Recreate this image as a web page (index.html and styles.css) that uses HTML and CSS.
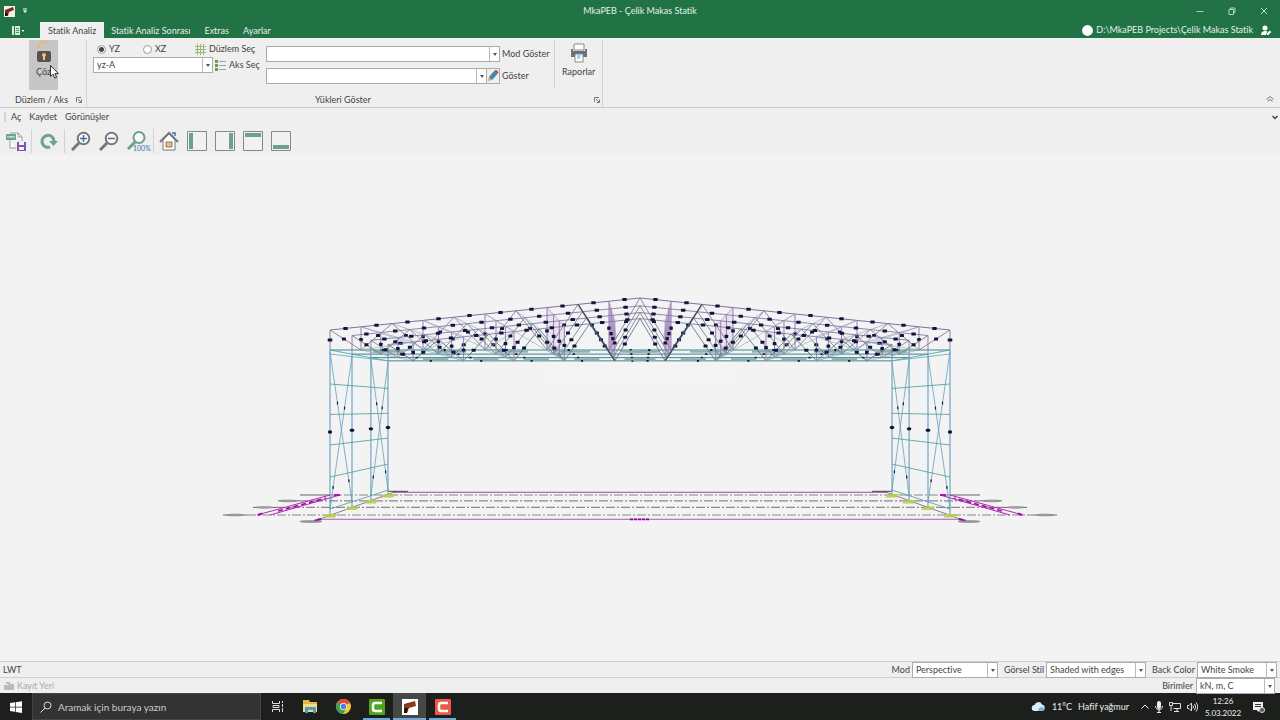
FILE: index.html
```html
<!DOCTYPE html>
<html lang="tr">
<head>
<meta charset="utf-8">
<title>MkaPEB - Çelik Makas Statik</title>
<link rel="stylesheet" href="styles.css">
</head>
<body>
<div class="app">
  <header class="titlebar">
    <div class="quick">
      <svg width="11" height="11" viewBox="0 0 11 11"><rect width="11" height="11" fill="#f6efec"/><path d="M1 4 9 1l1 3-5 2-1 4H1z" fill="#7a2d14"/><path d="M1 7h3l-1 3H1z" fill="#241512"/></svg>
      <svg width="6" height="6" viewBox="0 0 6 6"><path d="M1 1h4" stroke="#fff"/><path d="M1 2.500h4L3 5z" fill="#fff"/></svg>
    </div>
    <h1 class="title">MkaPEB - Çelik Makas Statik</h1>
    <div class="winbtns">
      <button aria-label="Küçült"><svg width="8" height="8" viewBox="0 0 8 8"><path d="M.5 4.500h7" stroke="#a9cdb8"/></svg></button>
      <button aria-label="Geri yükle"><svg width="8" height="8" viewBox="0 0 8 8" fill="none" stroke="#b5d3c1"><path d="M1 2.500h4.500v5H1zM2.500 2.500v-1.500h4.500v4.500H5.500"/></svg></button>
      <button aria-label="Kapat"><svg width="8" height="8" viewBox="0 0 8 8"><path d="M1 1l6 6M7 1 1 7" stroke="#c5dece"/></svg></button>
    </div>
  </header>

  <nav class="tabs">
    <button class="filetab" aria-label="Dosya"><svg width="13" height="9" viewBox="0 0 13 9"><path d="M0 0h2v9H0zM3 0h5v9H3z" fill="#dcebe2"/><path d="M4 2.500h3M4 4.500h3M4 6.500h3" stroke="#4f8d69"/><path d="M9.500 4h3L11 6z" fill="#fff"/></svg></button>
    <button class="tab active">Statik Analiz</button>
    <button class="tab">Statik Analiz Sonrası</button>
    <button class="tab">Extras</button>
    <button class="tab">Ayarlar</button>
    <div class="project">
      <svg width="11" height="11" viewBox="0 0 11 11"><circle cx="5.500" cy="5.500" r="5.400" fill="#fff"/></svg>
      <span>D:\MkaPEB Projects\Çelik Makas Statik</span>
      <svg class="user" width="11" height="11" viewBox="0 0 11 11" fill="#fff"><circle cx="4" cy="3" r="2.500"/><path d="M0 10c0-3 2-4 4-4 1.500 0 2 .3 2.600.8L5 9v1z"/><path d="m5.800 8.600 3-3 1.500 1.500-3 3H5.800z"/></svg>
    </div>
  </nav>

  <section class="ribbon">
    <div class="group solve-group">
      <div class="group-body">
        <button class="solve">
          <svg width="20" height="23" viewBox="0 0 20 23"><path d="M5 8V5q5-6 10-1" stroke="#e5b883" stroke-width="2.500" stroke-dasharray="3 1" fill="none"/><rect x="3" y="11" width="14" height="11" rx="2" fill="#5b504c"/><path d="M10 13a2 2 0 0 1 1 3.700V20H9v-3.300A2 2 0 0 1 10 13z" fill="#f0c48a"/></svg>
          <span>Çöz</span>
        </button>
      </div>
      <div class="caption"><span>Düzlem / Aks</span><svg class="launch" width="6" height="6" viewBox="0 0 6 6" fill="none" stroke="#777"><path d="M.5 5V.5H5M2 2l3 3M5.500 2.500v3h-3"/></svg></div>
    </div>
    <div class="group wide-group">
      <div class="group-body loads">
        <div class="plane">
          <div class="row">
            <label class="opt"><input type="radio" name="plane" checked>YZ</label>
            <label class="opt"><input type="radio" name="plane">XZ</label>
            <button class="link"><svg width="11" height="11" viewBox="0 0 11 11" stroke="#9ab77c" fill="none"><path d="M2.500 0v11M5.500 0v11M8.500 0v11M0 2.500h11M0 5.500h11M0 8.500h11"/></svg>Düzlem Seç</button>
          </div>
          <div class="row">
            <span class="combo axis"><select aria-label="Aks"><option>yz-A</option></select></span>
            <button class="link near"><svg width="11" height="11" viewBox="0 0 11 11"><path d="M0 0h3v3H0zM0 4h3v3H0zM0 8h3v3H0z" fill="#6f9d45"/><path d="M4 1.500h7M4 5.500h7M4 9.500h7" stroke="#8aa5bd"/></svg>Aks Seç</button>
          </div>
        </div>
        <div class="shows">
          <div class="row"><span class="combo mode"><select id="mode"><option></option></select></span><label for="mode">Mod Göster</label></div>
          <div class="row"><span class="combo show"><select id="show"><option></option></select></span><button class="pencil" aria-label="Düzenle"><svg width="12" height="12" viewBox="0 0 12 12"><path d="m1 11 1-4 3 3z" fill="#dca56c"/><path d="m2 7 5-6 3.500 3-5.500 6z" fill="#4686a8"/><path d="m7 1 1.500-1q2.500 0 3 3l-1 1z" fill="#a9583f"/></svg></button><label for="show">Göster</label></div>
        </div>
        <button class="reports">
          <svg width="18" height="20" viewBox="0 0 18 20"><path d="M4 1h10v6H4z" fill="#fff" stroke="#888"/><path d="M1 6h2v2h12V6h2v8H1z" fill="#737373"/><path d="M4 9h10v2H4z" fill="#3d6fa8"/><path d="M5 11h8v8H5z" fill="#fff" stroke="#888"/><path d="M7 13h4M7 15h3" stroke="#6d9bd0"/></svg>
          <span>Raporlar</span>
        </button>
      </div>
      <div class="caption"><span>Yükleri Göster</span><svg class="launch" width="6" height="6" viewBox="0 0 6 6" fill="none" stroke="#777"><path d="M.5 5V.5H5M2 2l3 3M5.500 2.500v3h-3"/></svg></div>
    </div>
    <button class="collapse" aria-label="Şeridi daralt"><svg width="8" height="6" viewBox="0 0 8 6" fill="none" stroke="#777"><path d="m.5 3.500 3.500-3 3.500 3M1.500 5.500l2.500-2 2.500 2"/></svg></button>
  </section>

  <nav class="menu">
    <button>Aç</button><button>Kaydet</button><button>Görünüşler</button>
    <svg class="more" width="6" height="5" viewBox="0 0 6 5"><path d="m.5 1 2.500 2.500L5.500 1" stroke="#444" stroke-width="1.500" fill="none"/></svg>
  </nav>

  <div class="tools">
    <button class="export" aria-label="Dışa aktar"><svg width="20" height="20" viewBox="0 0 20 20"><path d="M4 2h8l4 4v4M4 9v8h6" fill="#fff" stroke="#999"/><path d="M12 2v4h4" fill="none" stroke="#999"/><rect y="3" width="10" height="6" fill="#6da38f"/><path d="M2 5v2M4 7V5l1 1 1-1v2M8 5v2" stroke="#dbeee6" fill="none"/><path d="M11 11h9v9h-9z" fill="#7c56a0"/><path d="M13 11h5v3h-5zM13 16h5v3h-5z" fill="#f4eff8"/></svg></button>
    <button class="refresh" aria-label="Yenile"><svg width="18" height="16" viewBox="0 0 18 16"><path d="M10 14A6 6 0 1 1 14 8" fill="none" stroke="#6ca28e" stroke-width="3"/><path d="M9 8h9l-4.500 5z" fill="#6ca28e"/></svg></button>
    <button aria-label="Yakınlaştır"><svg width="20" height="20" viewBox="0 0 20 20" fill="none"><path d="M8 12 1 19" stroke="#777" stroke-width="3"/><circle cx="12.500" cy="7.500" r="5.800" fill="#f8f8f8" stroke="#777" stroke-width="2"/><path d="M9 7.500h7M12.500 4v7" stroke="#426eb1" stroke-width="1.500"/></svg></button>
    <button aria-label="Uzaklaştır"><svg width="20" height="20" viewBox="0 0 20 20" fill="none"><path d="M8 12 1 19" stroke="#777" stroke-width="3"/><circle cx="12.500" cy="7.500" r="5.800" fill="#f8f8f8" stroke="#777" stroke-width="2"/><path d="M9 7.500h7" stroke="#426eb1" stroke-width="1.500"/></svg></button>
    <button class="fit" aria-label="Yüzde yüz"><svg width="24" height="22" viewBox="0 0 24 22" fill="none"><path d="M8 12 1 19" stroke="#68a08b" stroke-width="3"/><circle cx="12" cy="7.500" r="5.500" fill="#f8f8f8" stroke="#68a08b" stroke-width="2"/><text x="6" y="21" class="pct">100%</text></svg></button>
    <button class="home" aria-label="Ana görünüm"><svg width="20" height="20" viewBox="0 0 20 20" fill="none"><path d="M4 9v10h12V9l-6-6z" fill="#fff" stroke="#777"/><path d="m1 11 9-9 9 9" stroke="#777" stroke-width="2"/><path d="M13 2h3v3" stroke="#426eb1" stroke-width="1.500"/><path d="M7 11h6v5H7z" fill="#f0c465" stroke="#777"/></svg></button>
    <button aria-label="Sol panel"><svg width="20" height="20" viewBox="0 0 20 20"><path d="M.5.5h19v19H.5z" fill="#f1f1f1" stroke="#888"/><path d="M2 2h4v16H2z" fill="#6ba28e"/></svg></button>
    <button aria-label="Sağ panel"><svg width="20" height="20" viewBox="0 0 20 20"><path d="M.5.5h19v19H.5z" fill="#f1f1f1" stroke="#888"/><path d="M14 2h4v16h-4z" fill="#6ba28e"/></svg></button>
    <button aria-label="Üst panel"><svg width="20" height="20" viewBox="0 0 20 20"><path d="M.5.5h19v19H.5z" fill="#f1f1f1" stroke="#888"/><path d="M2 2h16v4H2z" fill="#6ba28e"/></svg></button>
    <button aria-label="Alt panel"><svg width="20" height="20" viewBox="0 0 20 20"><path d="M.5.5h19v19H.5z" fill="#f1f1f1" stroke="#888"/><path d="M2 14h16v4H2z" fill="#6ba28e"/></svg></button>
  </div>

  <main class="viewport"><svg id="model" viewBox="0 155 1280 506"></svg></main>

  <footer class="status">
    <span class="grow">LWT</span>
    <label for="proj">Mod</label><span class="combo s1"><select id="proj"><option>Perspective</option></select></span>
    <label for="style">Görsel Stil</label><span class="combo s2"><select id="style"><option>Shaded with edges</option></select></span>
    <label for="back">Back Color</label><span class="combo s3"><select id="back"><option>White Smoke</option></select></span>
  </footer>
  <footer class="status second">
    <svg width="10" height="9" viewBox="0 0 10 9"><path d="M0 4h4l1-1h5v6H0zM2 1h4v2H2z" fill="#bbb"/></svg>
    <span class="grow muted">Kayıt Yeri</span>
    <label for="units">Birimler</label><span class="combo s4"><select id="units"><option>kN, m, C</option></select></span>
  </footer>

  <footer class="taskbar">
    <button class="start" aria-label="Başlat"><svg width="12" height="12" viewBox="0 0 12 12" fill="#fff"><path d="m0 2 5-.7V5.700H0zM5.700 1.200 12 .2v5.500H5.700zM0 6.400h5v4.400l-5-.7zM5.700 6.400H12v5.500l-6.300-.9z"/></svg></button>
    <label class="search"><svg width="12" height="12" viewBox="0 0 12 12" fill="none" stroke="#ddd"><circle cx="7.500" cy="4.500" r="3.500"/><path d="M5 7 .5 11.500"/></svg><input type="text" placeholder="Aramak için buraya yazın" aria-label="Arama"></label>
    <button class="app-btn" aria-label="Görev görünümü"><svg width="12" height="11" viewBox="0 0 12 11" fill="none" stroke="#ddd"><path d="M.5 0v2.500h7V0M.5 11V8.500h7V11M1 4.500h6v2H1zM10.500 0v2M10.500 3v3M10.500 7v4"/></svg></button>
    <button class="app-btn" aria-label="Dosya Gezgini"><svg width="15" height="13" viewBox="0 0 15 13"><path d="M0 0h6l1 2h7v10H0z" fill="#e8b544"/><path d="M0 4h14v8H0z" fill="#f8d978"/><path d="M2 7h11v6h-3v-3H5v3H2z" fill="#4a9bc9"/></svg></button>
    <button class="app-btn" aria-label="Chrome"><svg width="15" height="15" viewBox="0 0 16 16"><circle cx="8" cy="8" r="8" fill="#f5c932"/><path d="M8 8 1 4a8 8 0 0 1 14 0z" fill="#df4c3c"/><path d="M8 8 1 4a8 8 0 0 0 6.500 12L11 10z" fill="#3aa257"/><circle cx="8" cy="8" r="3.800" fill="#fff"/><circle cx="8" cy="8" r="3" fill="#4a83dc"/></svg></button>
    <button class="app-btn open" aria-label="Camtasia"><svg width="16" height="16" viewBox="0 0 16 16"><rect width="16" height="16" rx="1" fill="#51a51e"/><path d="M13 4H6.500Q4 4 4 6v4q0 2 2.500 2H13" stroke="#fff" stroke-width="2.500" fill="none"/></svg></button>
    <button class="app-btn open current" aria-label="MkaPEB"><svg width="16" height="16" viewBox="0 0 16 16"><rect width="16" height="16" fill="#fff"/><path d="m2 5 11-3 1 5-7 2-2 5H2z" fill="#873b1b"/><path d="M2 9h4l-1 5H2z" fill="#25120d"/></svg></button>
    <button class="app-btn open" aria-label="Camtasia Recorder"><svg width="16" height="16" viewBox="0 0 16 16"><rect width="16" height="16" rx="1" fill="#ec5849"/><path d="M13 4H6.500Q4 4 4 6v4q0 2 2.500 2H13" stroke="#fff" stroke-width="2.500" fill="none"/></svg></button>
    <div class="tray">
      <svg width="15" height="11" viewBox="0 0 15 11"><path d="M4 10a3 3 0 0 1-.5-6A4 4 0 0 1 11 3.500a3.300 3.300 0 0 1 0 6.500z" fill="#d9edfb"/><path d="M7 10c0-3 2-4 4-4a2 2 0 0 1 0 4z" fill="#79b5e5"/></svg>
      <span class="weather"><span>11°C</span><span>Hafif yağmur</span></span>
      <svg width="8" height="5" viewBox="0 0 8 5"><path d="M.5 4.500 4 1l3.500 3.500" stroke="#eee" fill="none"/></svg>
      <svg width="8" height="12" viewBox="0 0 8 12"><rect x="2" width="4" height="8" rx="2" fill="#eee"/><path d="M.5 5c0 5 7 5 7 0M4 9v2.500M2 11.500h4" stroke="#eee" fill="none"/></svg>
      <svg width="12" height="10" viewBox="0 0 12 10" fill="none" stroke="#ddd"><path d="M3.500 1.500h8v5h-7M.5.5h3v3h-3zM2 3.500V9M8 6.500v3M5 9.500h5"/></svg>
      <svg width="11" height="10" viewBox="0 0 11 10" fill="none" stroke="#ddd"><path d="M.5 3.500h1.500L4.500 1v8L2 6.500H.5zM6 3.500q1 1.500 0 3M7.500 2q2.500 3 0 6M9 .5q3.500 4.500 0 9"/></svg>
      <time class="clock"><span>12:26</span><span>5.03.2022</span></time>
      <svg class="note" width="12" height="12" viewBox="0 0 12 12"><path d="M0 1h10v8H7l-2 2-1-2H0z" fill="#eee"/><path d="M2 3.500h6M2 5.500h6" stroke="#333"/><circle cx="9" cy="9" r="2.500" fill="#555" stroke="#ddd"/></svg>
    </div>
  </footer>
  <svg class="cursor" width="9" height="14" viewBox="0 0 9 14"><path d="M.5.5v11l2.600-2.300 1.700 4 1.800-.8L4.900 8.600H8.400z" fill="#fff" stroke="#333"/></svg>
</div>
<script src="model.js"></script>
</body>
</html>
```
FILE: styles.css
```css
* { box-sizing: border-box; }
body { margin: 0; font: 9px/12px Lato, "Noto Sans", sans-serif; font-variant-ligatures: none; color: #444; }
button { border: 0; padding: 0; margin: 0; background: none; font: inherit; color: inherit; }
svg { display: block; flex: none; }
.app { display: flex; flex-direction: column; height: 100vh; background: #efefef; position: relative; overflow: hidden; white-space: nowrap; }

.titlebar { display: grid; grid-template-columns: 1fr auto 1fr; align-items: center; height: 22px; background: #217346; color: #e3efe8; }
.quick { display: flex; align-items: center; gap: 7px; padding-left: 4px; }
.title { margin: 0; font-size: 9px; font-weight: 400; }
.winbtns { display: flex; justify-content: flex-end; gap: 24px; padding-right: 12px; }

.tabs { display: flex; align-items: stretch; height: 16px; background: #217346; color: #e3efe8; }
.filetab { width: 40px; padding-left: 12px; }
.tab { padding: 1px 7px 0; }
.tab.active { background: #efefef; color: #444; padding: 1px 8px 0; }
.project { margin-left: auto; display: flex; align-items: center; gap: 3px; padding-right: 8px; }
.user { margin-left: 5px; }

.ribbon { display: flex; height: 70px; border-bottom: 1px solid #cbcbcb; }
.group { display: flex; flex-direction: column; border-right: 1px solid #d4d4d4; margin-top: 2px; }
.solve-group { width: 87px; }
.wide-group { width: 516px; }
.group-body { flex: 1; }
.caption { display: flex; align-items: center; height: 14px; padding: 0 4px 0 15px; justify-content: space-between; }
.wide-group .caption { padding-left: 228px; padding-right: 2px; }
.solve { display: flex; flex-direction: column; align-items: center; gap: 3px; width: 29px; height: 50px; margin-left: 29px; background: #c6c6c6; }
.loads { display: flex; padding-left: 6px; }
.row { display: flex; align-items: center; height: 16px; }
.plane { width: 173px; padding-top: 1px; }
.opt { display: flex; align-items: center; gap: 3px; width: 46px; }
.opt:first-child { margin-left: 4px; }
.opt input { appearance: none; width: 9px; height: 9px; margin: 0; border: 1px solid #999; border-radius: 50%; background: #fff; }
.opt input:checked { background: radial-gradient(circle, #444 2px, #fff 3px); }
.link { display: flex; align-items: center; gap: 3px; margin-left: 6px; }
.near { margin-left: 2px; }
.shows { display: flex; flex-direction: column; gap: 6px; padding-top: 6px; width: 289px; border-right: 1px solid #d4d4d4; height: 48px; }
.shows label { padding-left: 2px; }
.combo { position: relative; display: block; height: 16px; border: 1px solid #ababab; background: #fff; }
.combo select { appearance: none; display: block; width: 100%; height: 14px; margin: 0; padding: 0 12px 0 3px; border: 0; background: none; font: inherit; color: inherit; }
.combo::before { content: ""; position: absolute; right: 9px; top: 0; bottom: 0; border-left: 1px solid #bbb; }
.combo::after { content: ""; position: absolute; right: 2px; top: 6px; border: 2px solid transparent; border-top: 3px solid #555; border-bottom: 0; pointer-events: none; }
.axis { width: 120px; }
.mode { width: 234px; }
.show { width: 221px; }
.pencil { width: 13px; height: 16px; border: 1px solid #ababab; border-left: 0; }
.reports { display: flex; flex-direction: column; align-items: center; gap: 3px; padding: 3px 0 0 7px; height: 40px; }
.collapse { margin: auto 6px 5px auto; }

.menu { display: flex; align-items: center; gap: 8px; height: 18px; padding: 0 2px 0 4px; }
.menu::before { content: ""; width: 2px; height: 10px; margin-right: -3px; background: #d5d5d5; }
.more { margin-left: auto; }
.tools { display: flex; align-items: center; gap: 8px; height: 29px; padding-left: 6px; }
.export { border-right: 1px solid #d2d2d2; width: 26px; height: 24px; }
.refresh { border-right: 1px solid #d2d2d2; width: 25px; height: 24px; margin-right: -2px; }
.fit { width: 27px; height: 24px; border-right: 1px solid #d2d2d2; margin-right: -3px; }
.pct { font: 7px Lato, sans-serif; fill: #426eb1; }

.viewport { flex: 1; min-height: 0; background: #f3f3f3; border-bottom: 1px solid #cfcfcf; }
.viewport svg { width: 100%; height: 100%; }
.status { display: flex; align-items: center; height: 16px; padding: 0 3px; border-bottom: 1px solid #cfcfcf; gap: 2px; }
.status .combo + label { margin-left: 4px; }
.status.second { height: 15px; border-bottom: 0; padding: 0 5px 0 4px; gap: 3px; }
.grow { flex: 1; }
.muted { color: #aaa; }
.s1 { width: 86px; }
.s2 { width: 100px; }
.s3 { width: 80px; }
.s4 { width: 79px; }

.taskbar { display: flex; align-items: stretch; height: 27px; background: #1d1f1d; color: #eee; font-size: 10px; }
.start { width: 32px; display: grid; place-items: center; }
.search { display: flex; align-items: center; gap: 6px; width: 229px; padding-left: 7px; background: #333; border: 1px solid #444; }
.search input { flex: 1; min-width: 0; border: 0; padding: 0; background: none; font: inherit; color: #ccc; }
.search input::placeholder { color: #ccc; opacity: 1; }
.app-btn { display: grid; place-items: center; width: 33px; }
.open { background: linear-gradient(#70a9d8, #70a9d8) center bottom / 27px 2px no-repeat; }
.current { background: linear-gradient(#70a9d8, #70a9d8) center bottom / 33px 2px no-repeat #454845; }
.tray { display: flex; align-items: center; gap: 6px; margin-left: auto; padding-right: 15px; }
.weather { display: flex; gap: 6px; margin-right: 6px; font-size: 9px; }
.clock { display: flex; flex-direction: column; align-items: center; width: 34px; margin-left: 2px; font-size: 8px; }
.note { margin-left: 7px; }
.cursor { position: absolute; left: 50px; top: 65px; }
```
FILE: model.js
```js
// Perspective drawing of the portal building: four frames, mirrored about the centre line.
const NS = 'http://www.w3.org/2000/svg';
const svg = document.getElementById('model');
const CX = 640, HORIZON = 408;
const depth = [1, 0.929, 0.868, 0.813];

function add(tag, attrs) {
  const el = document.createElementNS(NS, tag);
  for (const k in attrs) el.setAttribute(k, attrs[k]);
  svg.appendChild(el);
}
const pt = (x, y, f) => [CX + (x - CX) * depth[f], HORIZON + (y - HORIZON) * depth[f]];
function line(a, b, color, width = 0.6, dash) {
  const attrs = { x1: a[0], y1: a[1], x2: b[0], y2: b[1], stroke: color, 'stroke-width': width };
  if (dash) attrs['stroke-dasharray'] = dash;
  add('line', attrs);
}
function tag(a, b, w = 4.6, h = 3, t = 0.5) {
  const x = a[0] + (b[0] - a[0]) * t, y = a[1] + (b[1] - a[1]) * t;
  add('rect', { x: x - w / 2, y: y - h / 2, width: w, height: h, rx: 0.5, fill: '#14143f' });
}
function poly(points, fill, opacity) {
  add('polygon', { points: points.map(p => p.join(',')).join(' '), fill, opacity });
}

const topY = i => 330 - 3.2 * i;
const node = (side, i) => CX + side * (310 - 31 * i);

// Message fading out over the middle of the view
add('rect', { x: 545, y: 334, width: 192, height: 45, fill: '#fff', opacity: 0.15 });

// Ground grid
const ends = [[223, 247], [253, 276], [278, 299], [300, 329]];
depth.forEach((s, f) => {
  const y = pt(0, 515, f)[1], [x0, x1] = ends[f];
  line([x1, y], [2 * CX - x1, y], '#8a8a8a', 1.2, '9 2 2 2');
  for (const side of [-1, 1]) {
    const xa = CX + side * (CX - x0), xb = CX + side * (CX - x1);
    line([xa, y], [xb, y], '#555', 0.9);
    if (f < 3) add('ellipse', { cx: (xa + xb) / 2 , cy: y, rx: 8, ry: 1, fill: '#aaa', stroke: '#666', 'stroke-width': 0.4 });
  }
});
line([393, 492.300], [887, 492.300], '#a23caa', 1.1);
line([317, 519.300], [963, 519.300], '#a45cab', 1.1);
line([630, 519.300], [650, 519.300], '#a000a0', 1.8, '3 1');
for (const s of [-1, 1]) {
  const X = x => CX + s * (CX - x);
  line([X(257), 515], [X(330), 495], '#a928b4', 1);
  line([X(270), 515], [X(340), 495], '#a928b4', 1);
  line([X(278), 511], [X(326), 498], '#b000b0', 1.6, '5 3');
  line([X(258), 515], [X(262), 513.500], '#b000b0', 2);
  line([X(334), 495], [X(340), 495], '#b000b0', 1.8);
  line([X(317), 520], [X(396), 491.500], '#775577', 0.8);
  line([X(314), 521], [X(321), 519], '#a000a0', 2);
  line([X(388), 491.300], [X(408), 491.300], '#444', 1);
  add('ellipse', { cx: X(311), cy: 521.500, rx: 11, ry: 1, fill: '#999', stroke: '#666', 'stroke-width': 0.4 });
}

for (const s of [-1, 1]) {
  const N = i => node(s, i);
  // Purlin planes
  poly([pt(N(9), topY(9), 0), [CX + s * 23, 337], [CX + s * 31, 350]], '#bda6d2', 0.75);
  poly([pt(N(7), topY(7), 0), pt(N(7), topY(7), 3), pt(N(7), 350, 3), pt(N(7), 350, 0)], '#d9cfe6', 0.45);

  depth.forEach((d, f) => {
    // Bottom chord and its shaded web
    const a = pt(N(0), 350, f), b = pt(CX, 350, f);
    line(a, b, '#3f858e', 1);
    if (f === 3 || f === 0) for (let i = 1; i < 10; i += 2) {
      const p = pt(N(i) - s * 12, 350, f), q = pt(N(i + 1) - s * 12, 350, f);
      const dy = f === 3 ? -1.500 : 1.500;
      line([p[0], p[1] + dy], [q[0], q[1] + dy], '#8baeae', 2.4);
    }
    // Top chord
    line(pt(N(0), topY(0), f), pt(CX, 298, f), f ? '#80689c' : '#684c85', 0.8);
    for (let i = 0; i < 10; i++) {
      const p = pt(N(i), topY(i), f), q = pt(N(i + 1), topY(i + 1), f);
      tag(p, q, 4.4, 3);
      const odd = i % 2, dn = odd ? pt(N(i), 350, f) : pt(N(i + 1), 350, f);
      const up = odd ? q : p;
      line(up, dn, f === 3 ? '#4d6875' : '#667884', 0.8);
      tag(up, dn, 4, 3, 0.45 + 0.05 * f);
      if (odd) {
        line(p, dn, '#9270a9', 0.9);
        tag(p, dn, 3.600, 3.200, 0.55);
        tag(pt(N(i), 350, f), pt(N(i + 1), 350, f), 2.300, 1.800, 0.7);
      }
    }
  });
  // Longitudinal members and roof bracing
  for (let i = 1; i < 10; i += 2) {
    line(pt(N(i), topY(i), 0), pt(N(i), topY(i), 3), '#9486b4', 0.6);
    line(pt(N(i), 350, 0), pt(N(i), 350, 3), '#6aaeb4', 0.6);
  }
  for (let i = 1; i < 7; i += 2) {
    line(pt(N(i), topY(i), 0), pt(N(i + 2), 350, 3), '#8aa8c2', 0.6);
    line(pt(N(i + 1), topY(i + 1), 0), pt(N(i + 1), topY(i + 1), 3), '#7aa0c4', 0.6);
    line(pt(N(i), 350, 0), pt(N(i), topY(i), 3), '#7aaeb0', 0.6);
  }
  line(pt(N(8), topY(8), 0), pt(N(9), 350, 3), '#3f5368', 1.400);

  // Columns
  depth.forEach((d, f) => {
    line(pt(N(0), 330, f), pt(N(0), 350, f), '#9270a9', 0.9);
    line(pt(N(0), 350, f), pt(N(0), 515, f), '#5a96bd', 1);
    const b = pt(N(0), 515, f), m = pt(N(0), 432, f);
    poly([[b[0] - 7, b[1] + 2.500], [b[0] - 3, b[1] - 1], [b[0] + 7, b[1] - 1], [b[0] + 5, b[1] + 2.500]], '#b3d045', 0.9);
    add('ellipse', { cx: m[0], cy: m[1], rx: 2.300, ry: 1.700, fill: '#14143f' });
  });
  tag(pt(N(0), 330, 0), pt(N(0), 350, 0));
  // Girts
  for (const y of [350, 384, 414.500, 445, 477, 509]) line(pt(N(0), y, 0), pt(N(0), y, 3), '#489b9a', 0.8);
  line(pt(N(0), 354, 0), pt(N(0), 350, 3), '#55a9bd', 0.8);
  // Wall bracing
  for (const [f, g] of [[0, 1], [2, 3]]) {
    for (const [p, q] of [[f, g], [g, f]]) {
      const a = pt(N(0), 352, p), b = pt(N(0), 509, q);
      line(a, b, '#5096b0', 0.7);
      tag(a, b, 1.200, 3, 0.34);
      tag(a, b, 1.200, 3, 0.86);
    }
  }
}
```
